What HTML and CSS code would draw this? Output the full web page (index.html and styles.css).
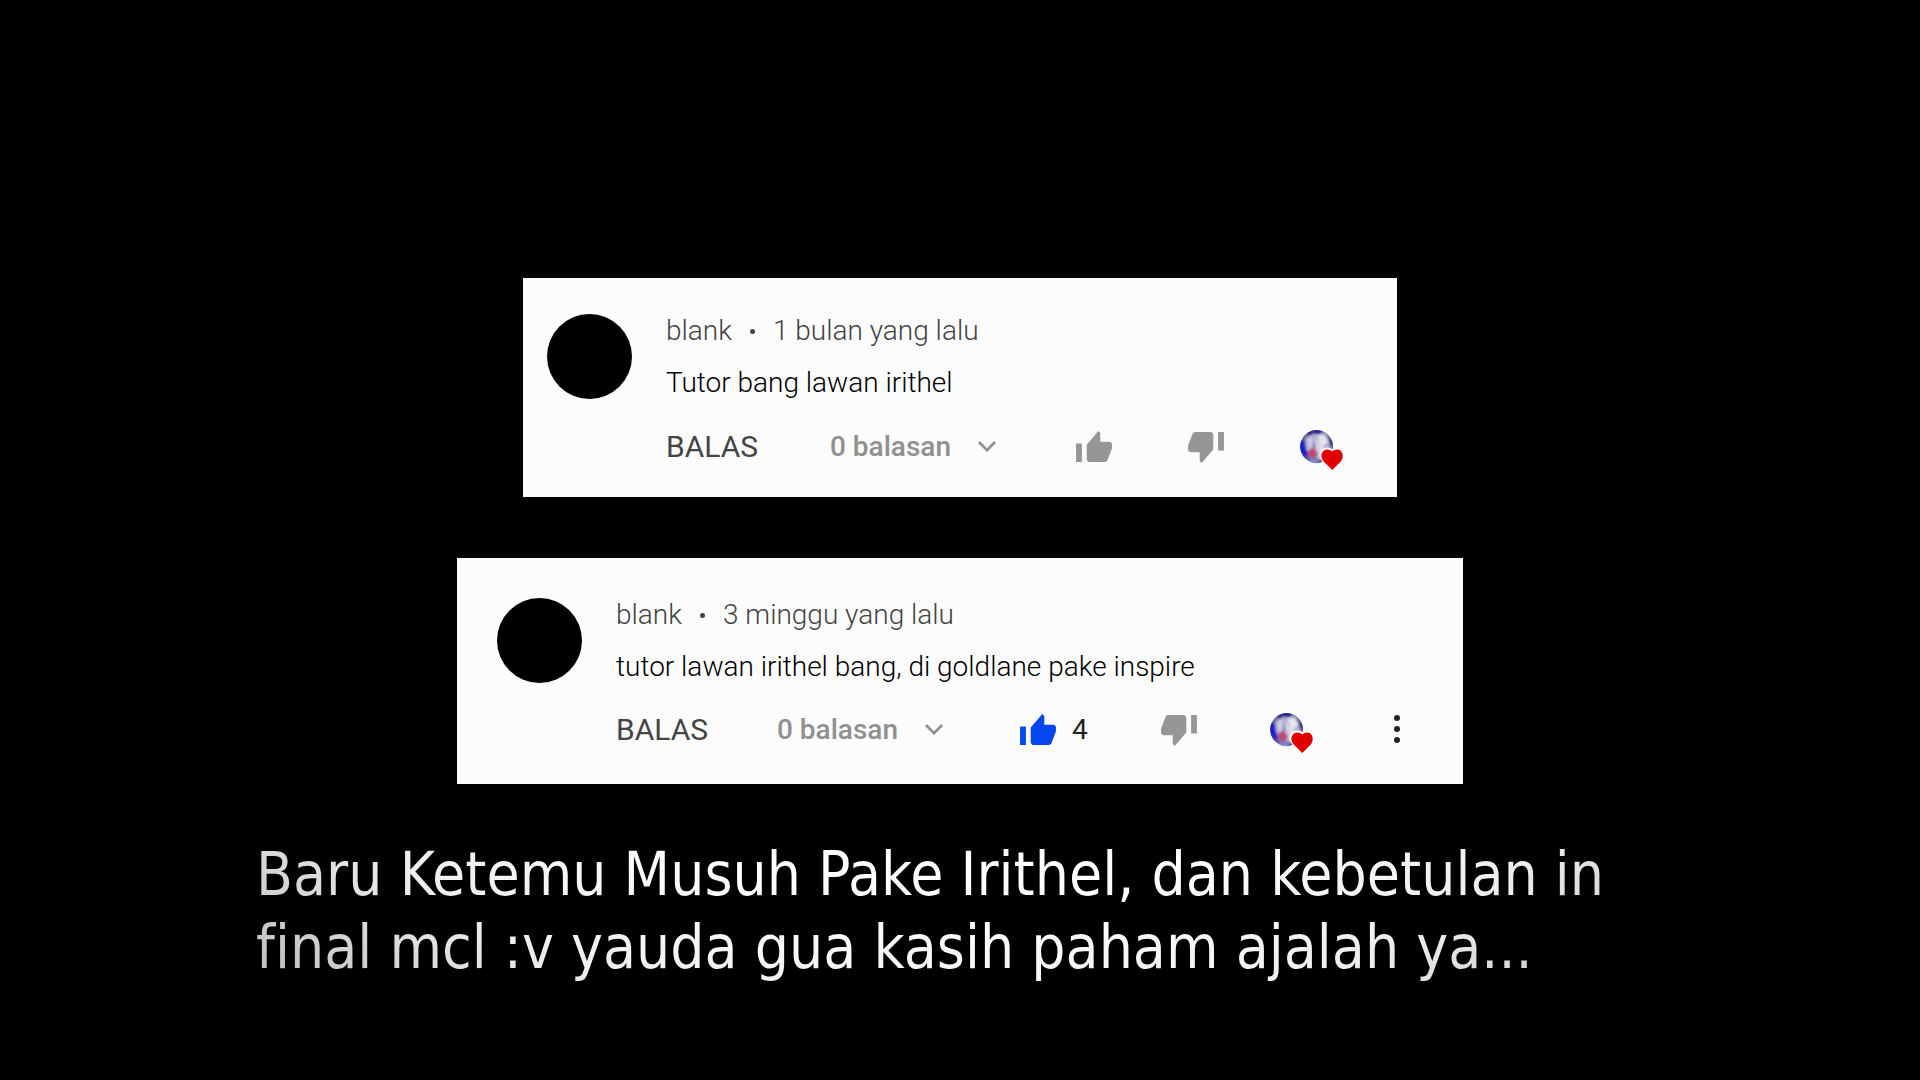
FILE: index.html
```html
<!DOCTYPE html>
<html lang="id">
    <head>
        <meta charset="utf-8">
        <title>Tutor lawan Irithel</title>
        <link rel="stylesheet" href="styles.css">
    </head>
    <body>
        <!-- shared icons -->
        <svg class="sprite" aria-hidden="true">
            <defs>
                <radialGradient id="ball" cx="55%" cy="45%" r="58%">
                    <stop offset="0" stop-color="#dcd6e8"/>
                    <stop offset=".6" stop-color="#a3a3c4"/>
                    <stop offset="1" stop-color="#3c3c80"/>
                </radialGradient>
                <clipPath id="round"><circle cx="17" cy="17" r="17"/></clipPath>
                <filter id="soft"><feGaussianBlur stdDeviation="0.9"/></filter>
            </defs>
            <symbol id="thumb" viewBox="0 0 37 32">
                <path d="M0 13h6v19H0zM11 14 23 0l2 2v9h10l2 2v5l-5 13-2 1H13l-2-2z"/>
            </symbol>
            <symbol id="chevron" viewBox="0 0 20 12">
                <path d="M1 1l9 9 9-9" fill="none" stroke="currentColor" stroke-width="3"/>
            </symbol>
            <symbol id="heart" viewBox="0 0 44 42">
                <g clip-path="url(#round)">
                    <circle cx="17" cy="17" r="17" fill="url(#ball)"/>
                    <g filter="url(#soft)">
                        <path d="M0 11l4 0 1 8 4 8-5-1-4-6z" fill="#1414dc"/>
                        <path d="M7 2l8-3 9 1-4 4-7-1-4 3z" fill="#24248c"/>
                        <path d="M18 6l7-1 4 7-7 5z" fill="#e4e6ec"/>
                        <path d="M7 9l5-2 3 7-6 5z" fill="#d2cae6"/>
                        <path d="M13 9l3 8-3 3z" fill="#7f78ac"/>
                        <path d="M7 23l7-5 4 7-5 5z" fill="#c04474"/>
                        <path d="M8 30l9 1 4 4H10z" fill="#8c8ce6"/>
                        <path d="M27 5l7 7v7l-3-4z" fill="#34376c"/>
                        <path d="M20 18l4-2v12l-5 2z" fill="#f1e4ee"/>
                    </g>
                </g>
                <path d="M33 41 23 31c-4-5-1-12 5-12 2 0 4 1 5 2 1-1 3-2 5-2 6 0 8 7 4 12z" fill="#fcfcfc" stroke="#fcfcfc" stroke-width="2"/>
                <path d="M33 41 24 32c-4-5-2-11 3-12 3 0 5 1 6 2 1-1 3-2 6-2 5 1 6 7 3 12z" fill="#e10000"/>
            </symbol>
        </svg>

        <main>
            <article class="comment">
                <div class="avatar"></div>
                <div class="content">
                    <p class="meta"><span>blank</span><i class="dot"></i><span>1 bulan yang lalu</span></p>
                    <p class="text">Tutor bang lawan irithel</p>
                    <div class="actions">
                        <button class="reply">BALAS</button>
                        <button class="replies">0 balasan <svg class="chevron"><use href="#chevron"/></svg></button>
                        <button class="like" aria-label="Suka"><svg class="thumb"><use href="#thumb"/></svg></button>
                        <button class="dislike" aria-label="Tidak suka"><svg class="thumb"><use href="#thumb"/></svg></button>
                        <button aria-label="Hati"><svg class="heart"><use href="#heart"/></svg></button>
                    </div>
                </div>
            </article>

            <article class="comment wide">
                <div class="avatar"></div>
                <div class="content">
                    <p class="meta"><span>blank</span><i class="dot"></i><span>3 minggu yang lalu</span></p>
                    <p class="text">tutor lawan irithel bang, di goldlane pake inspire</p>
                    <div class="actions">
                        <button class="reply">BALAS</button>
                        <button class="replies">0 balasan <svg class="chevron"><use href="#chevron"/></svg></button>
                        <button class="like active"><svg class="thumb"><use href="#thumb"/></svg><span>4</span></button>
                        <button class="dislike" aria-label="Tidak suka"><svg class="thumb"><use href="#thumb"/></svg></button>
                        <button aria-label="Hati"><svg class="heart"><use href="#heart"/></svg></button>
                        <button class="more" aria-label="Lainnya"><i></i><i></i><i></i></button>
                    </div>
                </div>
            </article>

            <p class="caption">Baru Ketemu Musuh Pake Irithel, dan kebetulan in final mcl :v yauda gua kasih paham ajalah ya...</p>
        </main>
    </body>
</html>
```

FILE: styles.css
```css
* {
    box-sizing: border-box;
}

body {
    margin: 0;
    background: #000;
    font-family: Roboto, "Liberation Sans", sans-serif;
}

p {
    margin: 0;
}

.sprite {
    position: absolute;
    width: 0;
    height: 0;
}

main {
    display: flex;
    flex-direction: column;
    align-items: center;
    padding: 278px 48px 48px;
}

/* comment cards */
.comment {
    display: flex;
    gap: 34px;
    width: 100%;
    max-width: 874px;
    padding: 36px 24px 29px;
    background: #fcfcfc;
}

.comment.wide {
    max-width: 1006px;
    margin-top: 61px;
    padding: 40px 40px 33px;
}

.avatar {
    flex: none;
    width: 85px;
    height: 85px;
    border-radius: 50%;
    background: #000;
}

.content {
    flex: 1;
    padding-top: 1px;
}

.meta,
.text {
    font-size: 28px;
    font-weight: 300;
    line-height: 32px;
}

.meta {
    display: flex;
    align-items: center;
    color: #444;
}

.dot {
    width: 5px;
    height: 5px;
    margin: 0 18px;
    border-radius: 50%;
    background: #444;
}

.text {
    margin-top: 20px;
    color: #000;
}

.actions {
    display: flex;
    align-items: center;
    height: 44px;
    margin-top: 25px;
    gap: 76px;
}

.wide .actions {
    gap: 73px;
    margin-top: 24px;
}

/* buttons */
button {
    display: flex;
    align-items: center;
    padding: 0;
    border: 0;
    background: none;
    font: inherit;
    font-size: 28px;
    color: #909090;
}

.reply {
    width: 88px;
    font-size: 30px;
    color: #444;
}

.replies {
    justify-content: space-between;
    width: 166px;
    font-weight: 500;
}

.chevron {
    width: 18px;
    height: 11px;
}

.thumb {
    width: 36px;
    height: 31px;
    fill: #969696;
}

.dislike .thumb {
    margin-top: 2px;
    transform: rotate(180deg);
}

.like {
    gap: 16px;
    margin-left: 4px;
}

.like.active .thumb {
    fill: #0546ee;
}

.like span {
    color: #222;
}

.heart {
    width: 43px;
    height: 41px;
    margin-top: 8px;
}

.more {
    flex-direction: column;
    gap: 5px;
    margin-left: 8px;
}

.more i {
    width: 6px;
    height: 6px;
    border-radius: 50%;
    background: #222;
}

.caption {
    width: 100%;
    max-width: 1408px;
    margin-top: 54px;
    font-family: "DejaVu Sans Condensed", "DejaVu Sans", sans-serif;
    font-size: 60px;
    font-variant-ligatures: none;
    line-height: 73px;
    color: transparent;
    background: radial-gradient(ellipse 840px 420px at 50% -120px, #fff 45%, #eee 75%, #c4c4c4 100%);
    background-clip: text;
    -webkit-background-clip: text;
}
```
